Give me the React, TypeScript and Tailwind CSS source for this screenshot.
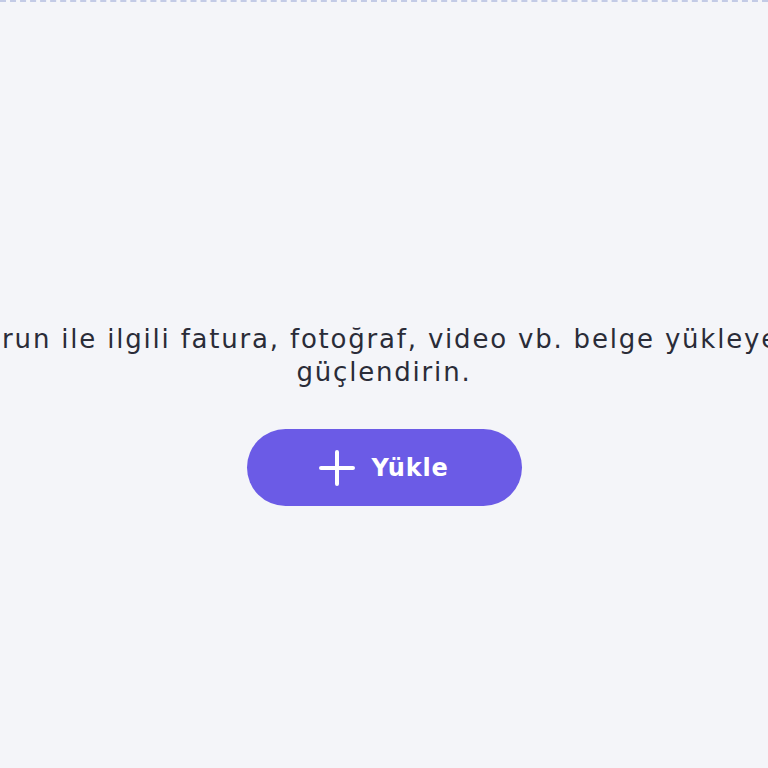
import React from "react";

export default function App() {
  return (
    <div
      className="w-[768px] h-[768px] overflow-hidden bg-[#f4f5f9] border-t-2 border-dashed border-[#c3cbe6] flex flex-col items-center"
      style={{ fontFamily: '"DejaVu Sans", "Noto Sans", sans-serif' }}
    >
      <div className="mt-[321px] w-full flex flex-col items-center text-[26px] leading-[33px] text-[#2a2c38] tracking-[1.8px]">
        <div className="w-full flex justify-center overflow-hidden">
          <span className="whitespace-nowrap shrink-0">
            Yaşadığınız sorun ile ilgili fatura, fotoğraf, video vb. belge yükleyerek talebinizi
          </span>
        </div>
        <div className="whitespace-nowrap">güçlendirin.</div>
      </div>
      <button className="mt-[40px] w-[275px] h-[77px] rounded-full bg-[#6b5be6] flex items-center justify-center gap-[16px] text-white">
        <svg width="36" height="36" viewBox="0 0 36 36" fill="none">
          <path d="M18 2v32M2 18h32" stroke="white" strokeWidth="4" strokeLinecap="round" />
        </svg>
        <span className="text-[24px] font-bold tracking-[0.8px]">Yükle</span>
      </button>
    </div>
  );
}
